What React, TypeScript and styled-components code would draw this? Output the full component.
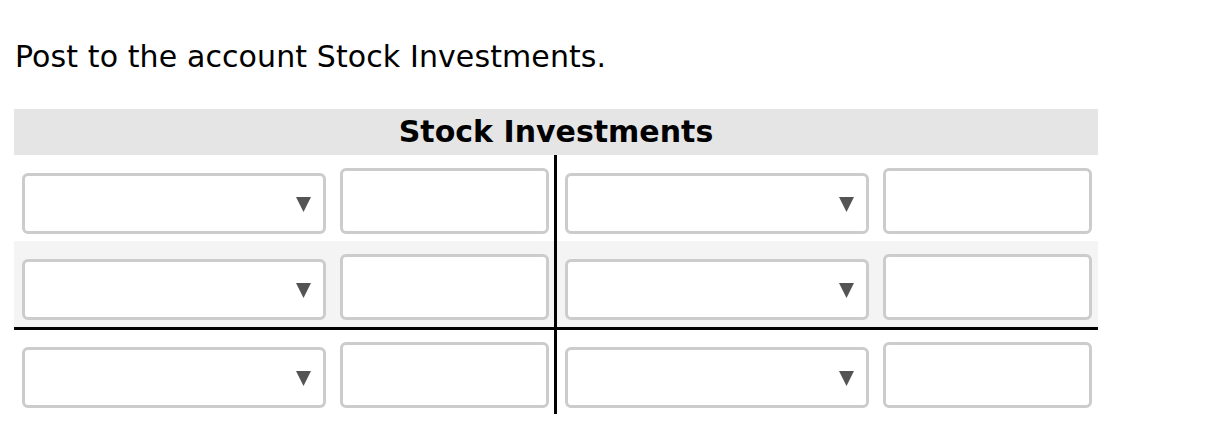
import { createGlobalStyle } from 'styled-components';
import styled from 'styled-components';

const GlobalStyle = createGlobalStyle`
  html, body {
    margin: 0;
    padding: 0;
    background: #ffffff;
  }
  body {
    font-family: Verdana, 'DejaVu Sans', sans-serif;
    color: #000000;
  }
`;

const Page = styled.div`
  padding-top: 40px;
  width: 1206px;
`;

const Prompt = styled.p`
  margin: 0 0 35px 15px;
  font-size: 30px;
  line-height: 34px;
  letter-spacing: 0.1px;
`;

const Account = styled.div`
  margin-left: 14px;
  width: 1084px;
`;

const AccountTitle = styled.div`
  height: 46px;
  background: #e5e5e5;
  text-align: center;
  font-weight: bold;
  font-size: 30px;
  line-height: 46px;
  box-sizing: border-box;
`;

const Row = styled.div<{ $shaded?: boolean; $ruled?: boolean; $height: number }>`
  display: grid;
  grid-template-columns: 540px 544px;
  height: ${(p) => p.$height}px;
  background: ${(p) => (p.$shaded ? '#f4f4f4' : 'transparent')};
  border-bottom: ${(p) => (p.$ruled ? '3px solid #000' : 'none')};
`;

const Side = styled.div<{ $divider?: boolean; $pad: number }>`
  display: flex;
  align-items: flex-end;
  gap: 14px;
  padding: 0 5px ${(p) => p.$pad}px 8px;
  border-left: ${(p) => (p.$divider ? '3px solid #000' : 'none')};
`;

const SelectWrap = styled.div`
  position: relative;
  width: 304px;
  height: 61px;
  flex: none;
`;

const Select = styled.select`
  appearance: none;
  width: 100%;
  height: 100%;
  box-sizing: border-box;
  border: 3px solid #cccccc;
  border-radius: 6px;
  background: #ffffff;
  font: inherit;
  font-size: 20px;
  outline: none;
`;

const Caret = styled.svg`
  position: absolute;
  right: 15px;
  top: 24px;
  width: 15px;
  height: 15px;
  pointer-events: none;
`;

const Amount = styled.input`
  width: 209px;
  height: 66px;
  box-sizing: border-box;
  border: 3px solid #cccccc;
  border-radius: 6px;
  background: #ffffff;
  font: inherit;
  font-size: 20px;
  padding: 0 8px;
  outline: none;
  flex: none;
`;

const Entry = () => (
  <>
    <SelectWrap>
      <Select defaultValue="">
        <option value=""></option>
      </Select>
      <Caret viewBox="0 0 15 15">
        <path d="M0 0 H15 L7.5 15 Z" fill="#545454" />
      </Caret>
    </SelectWrap>
    <Amount type="text" />
  </>
);

const rows = [
  { shaded: false, ruled: false, height: 86, pad: 7 },
  { shaded: true, ruled: true, height: 86, pad: 7 },
  { shaded: false, ruled: false, height: 84, pad: 6 },
];

export default function App() {
  return (
    <Page>
      <GlobalStyle />
      <Prompt>Post to the account Stock Investments.</Prompt>
      <Account>
        <AccountTitle>Stock Investments</AccountTitle>
        {rows.map((r, i) => (
          <Row key={i} $shaded={r.shaded} $ruled={r.ruled} $height={r.height}>
            <Side $pad={r.pad}>
              <Entry />
            </Side>
            <Side $divider $pad={r.pad}>
              <Entry />
            </Side>
          </Row>
        ))}
      </Account>
    </Page>
  );
}
